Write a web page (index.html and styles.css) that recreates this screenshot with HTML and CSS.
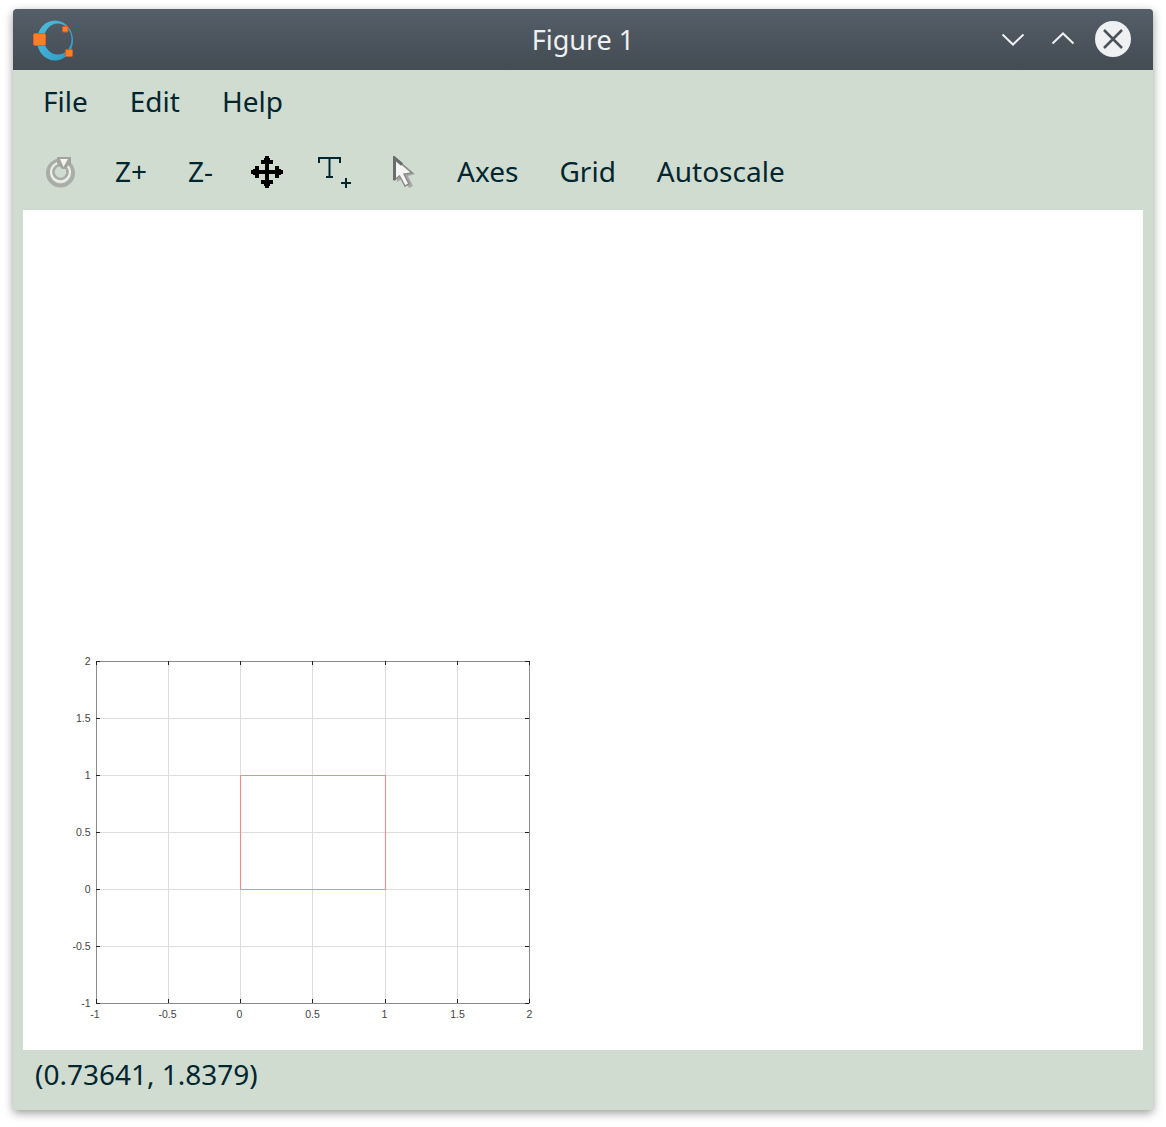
FILE: index.html
```html
<!DOCTYPE html>
<html lang="en">
<head>
<meta charset="utf-8">
<title>Figure 1</title>
<link rel="stylesheet" href="styles.css">
</head>
<body>
<div class="window">
  <header class="titlebar">
    <svg class="logo" width="52" height="52" viewBox="28 13 52 52">
      <defs>
        <linearGradient id="ring" x1="0" y1="0" x2="1" y2="1">
          <stop offset="0" stop-color="#52bddc"/>
          <stop offset="1" stop-color="#2a9ac6"/>
        </linearGradient>
      </defs>
      <path fill-rule="evenodd" fill="url(#ring)" d="M37 39.500a18 20 0 1 0 36 0a18 20 0 1 0 -36 0Z M44 38a13.750 15.500 0 1 1 27.500 0a13.750 15.500 0 1 1 -27.500 0Z"/>
      <rect x="33.500" y="32.500" width="12" height="12" rx="1.500" fill="#fb7f27" stroke="#e0641a" stroke-width="1"/>
      <rect x="62.500" y="25.500" width="5.500" height="5.500" rx="1" fill="#fb7f27" stroke="#d95d12" stroke-width="1"/>
      <rect x="65.500" y="48.500" width="7" height="7" rx="1" fill="#fb7f27" stroke="#d95d12" stroke-width="1"/>
    </svg>
    <div class="title">Figure 1</div>
    <div class="controls">
      <svg width="24" height="14" viewBox="0 0 24 14"><path d="M1.500 2.500 L12 12.500 L22.500 2.500" class="chev"/></svg>
      <svg width="24" height="14" viewBox="0 0 24 14"><path d="M1.500 11.500 L12 1.500 L22.500 11.500" class="chev"/></svg>
      <svg class="close" width="36" height="36" viewBox="0 0 36 36"><circle cx="18" cy="18" r="18" fill="#eff0f1"/><path d="M9 9 L27 27 M27 9 L9 27" class="cross"/></svg>
    </div>
  </header>

  <nav class="menubar">
    <span>File</span>
    <span>Edit</span>
    <span>Help</span>
  </nav>

  <div class="toolbar">
    <svg class="tool-rotate" width="36" height="36" viewBox="0 0 36 36">
      <circle cx="18.500" cy="19" r="12.500" class="rot-outer"/>
      <circle cx="18.500" cy="18" r="9.500" class="rot-mid"/>
      <circle cx="18.500" cy="18" r="7" class="rot-inner"/>
      <path d="M15 3 H29 V9 L23 15 H20 L15 9 Z" fill="#a2a4a0"/>
      <path d="M18 5 H26 L21.500 13 Z" fill="#f2f3f0"/>
    </svg>
    <span class="tool zp">Z+</span>
    <span class="tool zm">Z-</span>
    <svg class="tool-move" width="32" height="32" viewBox="0 0 32 32" shape-rendering="crispEdges">
      <path d="M14 14 V8 H10 V4 H13 V2 H14 V0 H18 V2 H19 V4 H22 V8 H18 V14 H24 V10 H28 V13 H30 V14 H32 V18 H30 V19 H28 V22 H24 V18 H18 V24 H22 V28 H19 V30 H18 V32 H14 V30 H13 V28 H10 V24 H14 V18 H8 V22 H4 V19 H2 V18 H0 V14 H2 V13 H4 V10 H8 V14 Z" fill="#000"/>
    </svg>
    <svg class="tool-text" width="34" height="34" viewBox="0 0 34 34">
      <path d="M1 7 V2 H22 V7 M11.500 2 V21 M8 21 H15 M23 27 H33 M28 22 V32" class="ttool"/>
    </svg>
    <svg class="tool-arrow" width="24" height="34" viewBox="0 0 24 34">
      <path class="arrow-shade" d="M3 2 L21 17 L14 19 L19 29 L15 31 L9 21 L3 25 Z"/>
      <path class="arrow-body" d="M2.500 2 V24 L7.500 20 L13 30 L17 28 L12 18 L20 17 Z"/>
      <path class="arrow-edge" d="M2.500 24 V2 L10 8.500"/>
    </svg>
    <span class="tool axes">Axes</span>
    <span class="tool grid">Grid</span>
    <span class="tool">Autoscale</span>
  </div>

  <main class="canvas">
    <svg class="plot" width="1120" height="840" viewBox="23 210 1120 840">
      <g class="gridlines">
        <path d="M168.500 661V1003M240.500 661V1003M312.500 661V1003M385.500 661V1003M457.500 661V1003"/>
        <path d="M96 718.500H529M96 775.500H529M96 832.500H529M96 889.500H529M96 946.500H529"/>
      </g>
      <path class="curve" d="M240.500 775.500H385.500V889.500H240.500Z"/>
      <path class="frame" d="M96.500 1003.500V661.500H529.500V1003.500Z"/>
      <path class="ticks" d="M96 661.500h4M96 718.500h4M96 775.500h4M96 832.500h4M96 889.500h4M96 946.500h4M96 1003.500h4
        M529 661.500h-4M529 718.500h-4M529 775.500h-4M529 832.500h-4M529 889.500h-4M529 946.500h-4M529 1003.500h-4
        M96.500 661v4M168.500 661v4M240.500 661v4M312.500 661v4M385.500 661v4M457.500 661v4M529.500 661v4
        M96.500 1003v-4M168.500 1003v-4M240.500 1003v-4M312.500 1003v-4M385.500 1003v-4M457.500 1003v-4M529.500 1003v-4"/>
      <g class="ylabels">
        <text x="90.500" y="665">2</text>
        <text x="90.500" y="722">1.5</text>
        <text x="90.500" y="779">1</text>
        <text x="90.500" y="836">0.5</text>
        <text x="90.500" y="893">0</text>
        <text x="90.500" y="950">-0.5</text>
        <text x="90.500" y="1007">-1</text>
      </g>
      <g class="xlabels">
        <text x="95" y="1018">-1</text>
        <text x="167.500" y="1018">-0.5</text>
        <text x="239.500" y="1018">0</text>
        <text x="312.500" y="1018">0.5</text>
        <text x="384.500" y="1018">1</text>
        <text x="457.500" y="1018">1.5</text>
        <text x="529.500" y="1018">2</text>
      </g>
    </svg>
  </main>

  <footer class="status">(0.73641, 1.8379)</footer>
</div>
</body>
</html>
```

FILE: styles.css
```css
html, body {
  margin: 0;
  padding: 0;
  background: #fff;
}
body {
  width: 1166px;
  height: 1127px;
  overflow: hidden;
  padding: 9px 13px 0;
  box-sizing: border-box;
  font-family: "Noto Sans", sans-serif;
  color: #00262f;
}
.window {
  width: 1140px;
  height: 1101px;
  display: flex;
  flex-direction: column;
  background: #d1dcd1;
  border-radius: 4px 4px 3px 3px;
  box-shadow: 0 3px 10px rgba(0, 0, 0, 0.4);
  overflow: hidden;
}
.titlebar {
  flex: 0 0 61px;
  display: flex;
  align-items: center;
  position: relative;
  background: linear-gradient(#555f69, #434b53);
}
.logo {
  margin-left: 15px;
}
.title {
  position: absolute;
  left: 0;
  right: 0;
  text-align: center;
  color: #eff0f1;
  font-size: 27px;
  line-height: 61px;
}
.controls {
  margin-left: auto;
  margin-right: 22px;
  margin-bottom: 1px;
  display: flex;
  align-items: center;
  gap: 26px;
}
.close {
  margin-left: -6px;
}
.chev {
  fill: none;
  stroke: #eff0f1;
  stroke-width: 2;
}
.cross {
  fill: none;
  stroke: #4a525a;
  stroke-width: 2.500;
}
.menubar {
  flex: 0 0 65px;
  display: flex;
  align-items: center;
  gap: 42px;
  padding: 0 0 4px 30px;
  box-sizing: border-box;
  font-size: 28px;
}
.toolbar {
  flex: 0 0 75px;
  display: flex;
  align-items: center;
  padding: 0 0 4px 29px;
  box-sizing: border-box;
  font-size: 28px;
}
.tool-rotate {
  filter: blur(0.7px);
  margin-top: 3px;
  margin-right: 37px;
}
.rot-outer {
  fill: none;
  stroke: #aaaca8;
  stroke-width: 4;
}
.rot-mid {
  fill: none;
  stroke: #eceee9;
  stroke-width: 2;
}
.rot-inner {
  fill: none;
  stroke: #a9aba7;
  stroke-width: 2.500;
}
.zp {
  margin-right: 41px;
}
.zm {
  margin-right: 38px;
}
.tool-move {
  margin-top: 2px;
  margin-right: 35px;
}
.tool-text {
  margin-top: 4px;
  margin-right: 40px;
}
.ttool {
  fill: none;
  stroke: #00262f;
  stroke-width: 2;
}
.tool-arrow {
  filter: blur(0.4px);
  margin-top: 4px;
  margin-right: 41px;
}
.arrow-shade {
  fill: #a4aaa4;
  transform: translate(2px, 1px);
}
.arrow-body {
  fill: #f6f6f6;
  stroke: #8b8d8a;
  stroke-width: 1.500;
}
.arrow-edge {
  fill: none;
  stroke: #6a6c69;
  stroke-width: 3;
}
.axes {
  margin-right: 41px;
}
.grid {
  margin-right: 41px;
}
.canvas {
  flex: 0 0 840px;
  margin: 0 10px;
  background: #fff;
}
.plot {
  display: block;
}
.gridlines path {
  fill: none;
  stroke: #dddddd;
  stroke-width: 1;
}
.curve {
  fill: none;
  stroke: #f08a8a;
  stroke-width: 1.100;
}
.frame {
  fill: none;
  stroke: #8a8a8a;
  stroke-width: 1;
}
.ticks {
  fill: none;
  stroke: #222;
  stroke-width: 1;
}
.ylabels text, .xlabels text {
  font-family: "Liberation Sans", sans-serif;
  font-size: 10.500px;
  fill: #444;
}
.ylabels text {
  text-anchor: end;
}
.xlabels text {
  text-anchor: middle;
}
.status {
  flex: 1;
  padding-left: 22px;
  font-size: 28px;
  line-height: 48px;
}
```
